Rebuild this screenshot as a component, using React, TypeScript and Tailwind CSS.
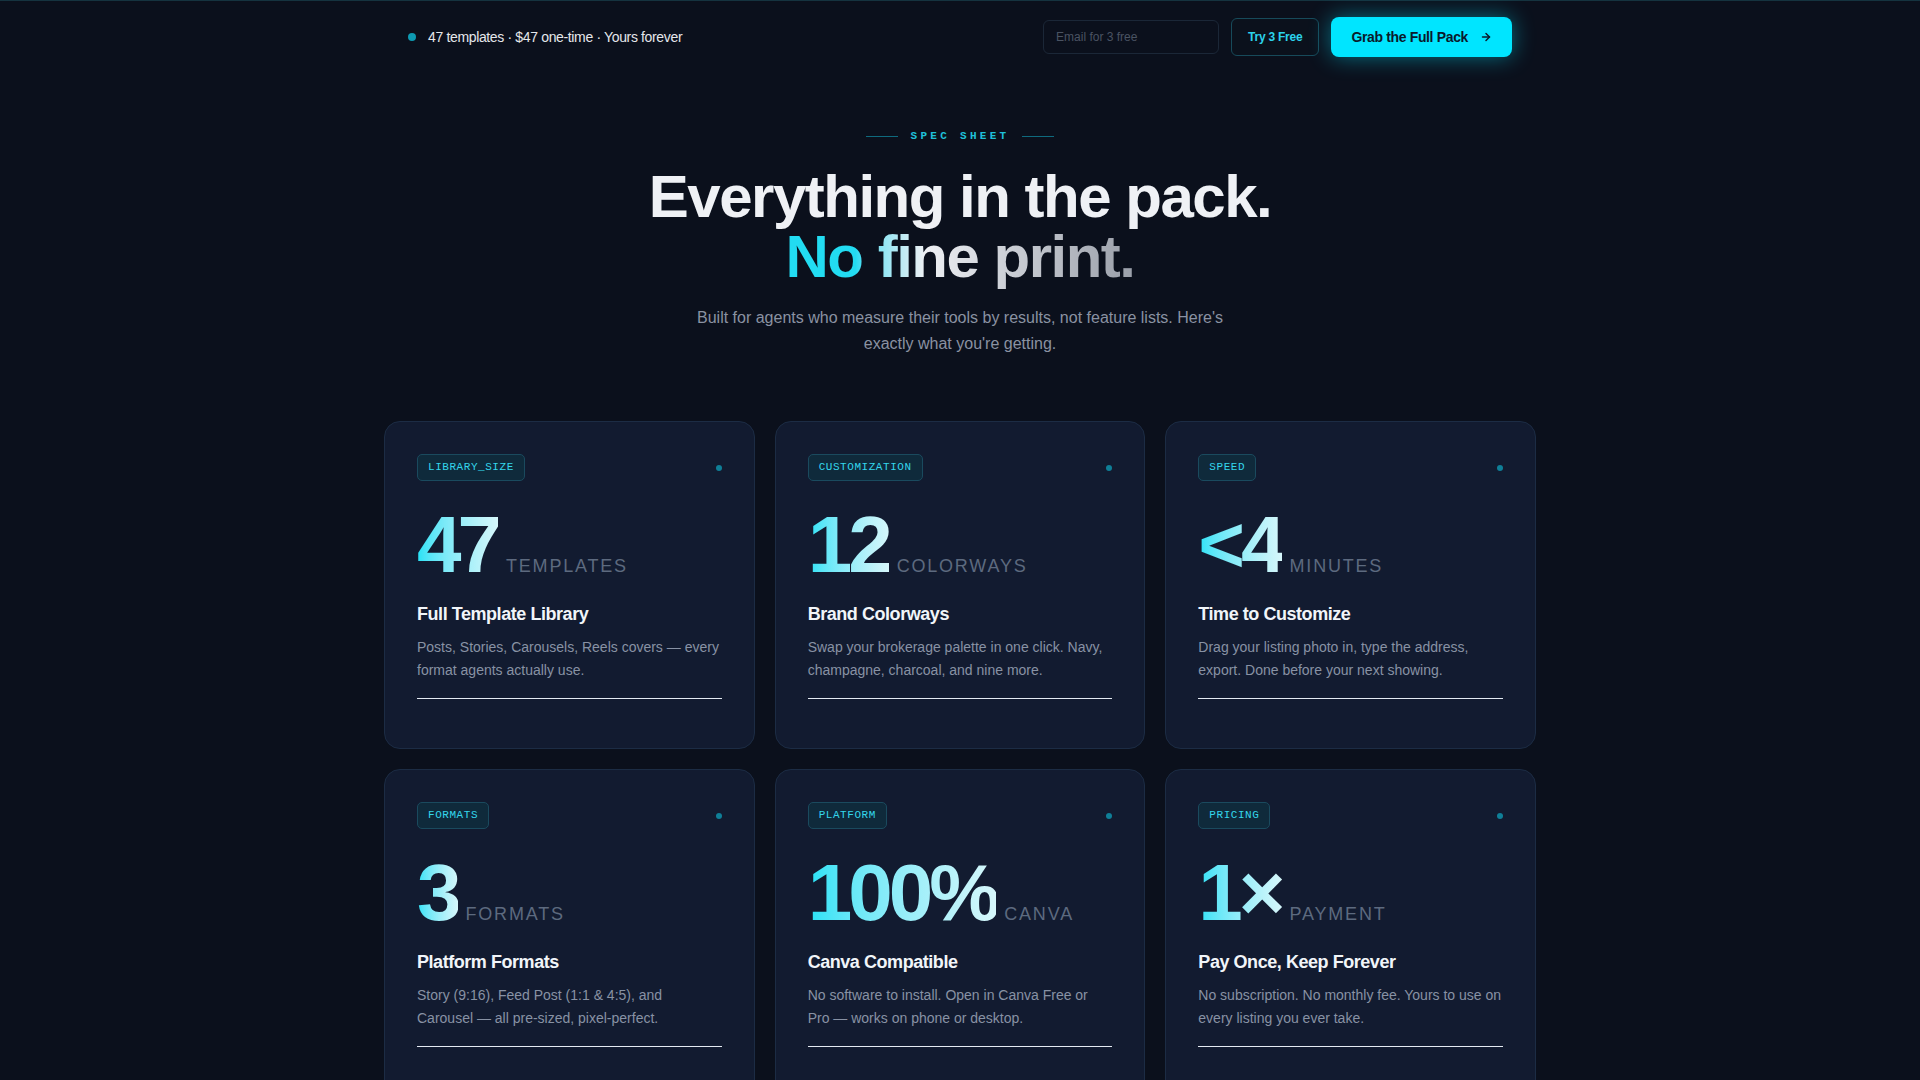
import React from "react";
import { ArrowRight } from "lucide-react";

const sans = { fontFamily: '"Liberation Sans", Arial, sans-serif' };

type Spec = {
  tag: string;
  value: string;
  unit: string;
  title: string;
  desc: string;
};

const specs: Spec[] = [
  {
    tag: "LIBRARY_SIZE",
    value: "47",
    unit: "Templates",
    title: "Full Template Library",
    desc: "Posts, Stories, Carousels, Reels covers — every format agents actually use.",
  },
  {
    tag: "CUSTOMIZATION",
    value: "12",
    unit: "Colorways",
    title: "Brand Colorways",
    desc: "Swap your brokerage palette in one click. Navy, champagne, charcoal, and nine more.",
  },
  {
    tag: "SPEED",
    value: "<4",
    unit: "Minutes",
    title: "Time to Customize",
    desc: "Drag your listing photo in, type the address, export. Done before your next showing.",
  },
  {
    tag: "FORMATS",
    value: "3",
    unit: "Formats",
    title: "Platform Formats",
    desc: "Story (9:16), Feed Post (1:1 & 4:5), and Carousel — all pre-sized, pixel-perfect.",
  },
  {
    tag: "PLATFORM",
    value: "100%",
    unit: "Canva",
    title: "Canva Compatible",
    desc: "No software to install. Open in Canva Free or Pro — works on phone or desktop.",
  },
  {
    tag: "PRICING",
    value: "1×",
    unit: "Payment",
    title: "Pay Once, Keep Forever",
    desc: "No subscription. No monthly fee. Yours to use on every listing you ever take.",
  },
];

function Card({ s }: { s: Spec }) {
  return (
    <div className="rounded-2xl border border-[#1c2c44] bg-[#121b30] p-8">
      <div className="flex items-center justify-between">
        <span className="flex h-[27px] items-center rounded-[5px] border border-[#1a4a5e] bg-[#0f2a3b] px-[10px] font-mono text-[11px] tracking-[0.05em] text-[#34d6ec]">
          {s.tag}
        </span>
        <span className="h-[6px] w-[6px] rounded-full bg-[#0f7f97]" />
      </div>
      <div className="mt-6 flex items-baseline">
        <span className="bg-linear-to-r from-[#1fe2f6] to-[#d6f7fb] bg-clip-text text-[80px] font-bold leading-none tracking-[-0.05em] text-transparent">
          {s.value}
        </span>
        <span className="ml-2 text-[18px] uppercase tracking-[0.1em] text-[#5d6a7f]">
          {s.unit}
        </span>
      </div>
      <h3 className="mt-[15px] text-[18px] font-bold leading-7 tracking-[-0.025em] text-[#f1f5f9]">
        {s.title}
      </h3>
      <p className="mt-[8px] text-[14px] leading-[1.65] text-[#8892a4]">{s.desc}</p>
      <div className="mb-[17px] mt-[16px] h-px bg-[#e4eaf2]" />
    </div>
  );
}

export default function App() {
  return (
    <div className="min-h-screen border-t border-[#15333f] bg-[#0b101c]" style={sans}>
      <header className="mx-auto flex max-w-6xl items-center justify-between px-6 py-4">
        <div className="flex items-center gap-3">
          <span className="h-2 w-2 rounded-full bg-[#0e9ab2]" />
          <span className="text-sm tracking-[-0.025em] text-[#e5e7eb]">
            47 templates · $47 one-time · Yours forever
          </span>
        </div>
        <div className="flex items-center gap-3">
          <input
            placeholder="Email for 3 free"
            className="h-[34px] w-[176px] rounded-md border border-[#1b2737] bg-transparent px-3 text-xs text-gray-200 placeholder:text-[#4a5362] outline-none"
            style={sans}
          />
          <button className="h-[38px] rounded-md border border-[#174a5a] bg-[#0b111c] px-4 text-xs font-bold tracking-[-0.02em] text-[#2bd3ec]">
            Try 3 Free
          </button>
          <button className="flex h-10 items-center gap-3 rounded-lg bg-[#00e5ff] px-5 text-sm font-bold tracking-[-0.025em] text-[#0a1a2b] shadow-[0_0_22px_rgba(0,229,255,0.45)]">
            Grab the Full Pack
            <ArrowRight size={12} strokeWidth={3} />
          </button>
        </div>
      </header>

      <section className="mx-auto max-w-6xl pt-[55px] text-center">
        <div className="flex items-center justify-center gap-3">
          <span className="h-px w-8 bg-[#0f6a7e]" />
          <span className="font-mono text-[11px] font-bold leading-4 tracking-[0.3em] text-[#1fc0da]">
            SPEC SHEET
          </span>
          <span className="h-px w-8 bg-[#0f6a7e]" />
        </div>
        <h1 className="mt-[23px] text-6xl font-bold leading-none tracking-tight text-[#eff1f5]">
          <span className="block">Everything in the pack.</span>
          <span className="block">
            <span className="bg-linear-to-r from-[#22dcf2] from-20% via-[#eef0f4] via-40% to-[#9a9fa9] bg-clip-text text-transparent">
              No fine print.
            </span>
          </span>
        </h1>
        <p className="mx-auto mt-[18px] max-w-xl text-base leading-relaxed text-[#8a92a2]">
          Built for agents who measure their tools by results, not feature lists. Here's exactly what you're getting.
        </p>
      </section>

      <section className="mx-auto mt-[64px] grid max-w-6xl grid-cols-3 gap-5 pb-20">
        {specs.map((s) => (
          <Card key={s.tag} s={s} />
        ))}
      </section>
    </div>
  );
}
